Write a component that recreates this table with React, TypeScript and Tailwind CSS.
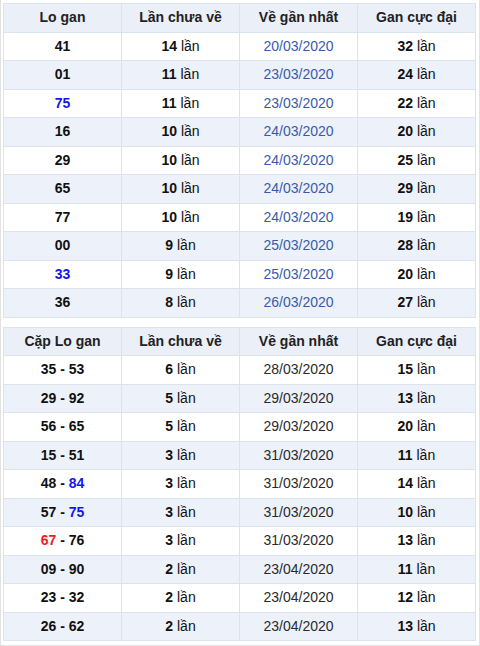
import React from 'react';

type Part = { t: string; c?: 'blue' | 'red' };
type Row = { lo: Part[]; n: string; date: string; max: string };

const logan: Row[] = [
    { lo: [{ t: '41' }], n: '14', date: '20/03/2020', max: '32' },
    { lo: [{ t: '01' }], n: '11', date: '23/03/2020', max: '24' },
    { lo: [{ t: '75', c: 'blue' }], n: '11', date: '23/03/2020', max: '22' },
    { lo: [{ t: '16' }], n: '10', date: '24/03/2020', max: '20' },
    { lo: [{ t: '29' }], n: '10', date: '24/03/2020', max: '25' },
    { lo: [{ t: '65' }], n: '10', date: '24/03/2020', max: '29' },
    { lo: [{ t: '77' }], n: '10', date: '24/03/2020', max: '19' },
    { lo: [{ t: '00' }], n: '9', date: '25/03/2020', max: '28' },
    { lo: [{ t: '33', c: 'blue' }], n: '9', date: '25/03/2020', max: '20' },
    { lo: [{ t: '36' }], n: '8', date: '26/03/2020', max: '27' },
];

const capLogan: Row[] = [
    { lo: [{ t: '35 - 53' }], n: '6', date: '28/03/2020', max: '15' },
    { lo: [{ t: '29 - 92' }], n: '5', date: '29/03/2020', max: '13' },
    { lo: [{ t: '56 - 65' }], n: '5', date: '29/03/2020', max: '20' },
    { lo: [{ t: '15 - 51' }], n: '3', date: '31/03/2020', max: '11' },
    { lo: [{ t: '48 - ' }, { t: '84', c: 'blue' }], n: '3', date: '31/03/2020', max: '14' },
    { lo: [{ t: '57 - ' }, { t: '75', c: 'blue' }], n: '3', date: '31/03/2020', max: '10' },
    { lo: [{ t: '67', c: 'red' }, { t: ' - 76' }], n: '3', date: '31/03/2020', max: '13' },
    { lo: [{ t: '09 - 90' }], n: '2', date: '23/04/2020', max: '11' },
    { lo: [{ t: '23 - 32' }], n: '2', date: '23/04/2020', max: '12' },
    { lo: [{ t: '26 - 62' }], n: '2', date: '23/04/2020', max: '13' },
];

const cell = 'w-[118px] flex items-center justify-center border-r border-b border-[#dde3ec]';

function GanTable({ first, rows, dateClass }: { first: string; rows: Row[]; dateClass: string }) {
    return (
        <div className="border-l border-t border-[#dde3ec] w-[473px]">
            {/* Header */}
            <div className="flex h-[28.5px] bg-[#eaeff8] font-bold text-[#222]">
                <div className={cell}>{first}</div>
                <div className={cell}>Lần chưa về</div>
                <div className={cell}>Về gần nhất</div>
                <div className={cell}>Gan cực đại</div>
            </div>
            {rows.map((r, i) => (
                <div key={i} className={`flex h-[28.5px] text-[#111] ${i % 2 === 1 ? 'bg-[#edf1fa]' : 'bg-white'}`}>
                    <div className={`${cell} font-bold whitespace-pre`}>
                        {r.lo.map((p, j) => (
                            <span
                                key={j}
                                className={p.c === 'blue' ? 'text-[#1515f0]' : p.c === 'red' ? 'text-[#f21b1b]' : ''}
                            >
                                {p.t}
                            </span>
                        ))}
                    </div>
                    <div className={cell}>
                        <span className="font-bold">{r.n}</span>&nbsp;lần
                    </div>
                    <div className={`${cell} ${dateClass}`}>{r.date}</div>
                    <div className={cell}>
                        <span className="font-bold">{r.max}</span>&nbsp;lần
                    </div>
                </div>
            ))}
        </div>
    );
}

export default function App() {
    return (
        <div
            className="w-[480px] h-[646px] bg-white border-x border-b border-[#e2e2e2] pl-[2px] pt-[3px] text-[14px] flex flex-col gap-[9px]"
            style={{ fontFamily: '"Liberation Sans", Arial, sans-serif' }}
        >
            <GanTable first="Lo gan" rows={logan} dateClass="text-[#3a5aa8]" />
            <GanTable first="Cặp Lo gan" rows={capLogan} dateClass="text-[#2a2a2a]" />
        </div>
    );
}
